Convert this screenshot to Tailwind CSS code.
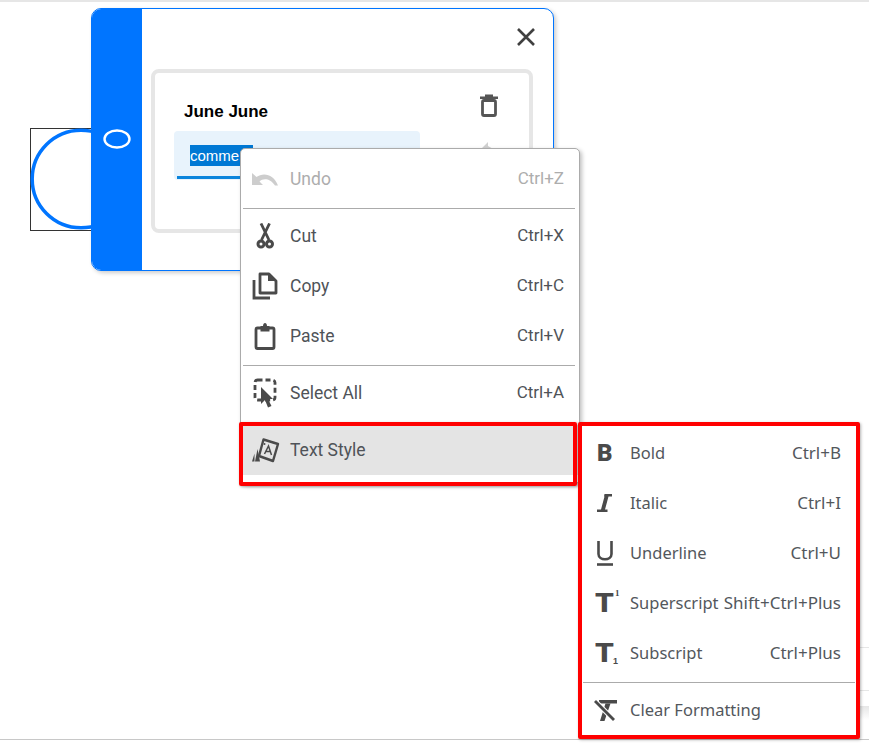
<!DOCTYPE html>
<html>
<head>
<meta charset="utf-8">
<script src="https://cdn.jsdelivr.net/npm/@tailwindcss/browser@4"></script>
</head>
<body class="bg-white">
<div class="relative w-[869px] h-[748px] overflow-hidden bg-white font-['Roboto',sans-serif]">
  <div class="h-[2px] bg-[#e6e6e6]"></div>

  <!-- background fragments at right edge -->
  <div class="absolute left-[860px] top-[647px] w-[9px] h-px bg-[#e6e6e6]"></div>
  <div class="absolute left-[860px] top-[690px] w-[9px] h-px bg-[#e6e6e6]"></div>
  <div class="absolute left-[860px] top-[706px] w-[9px] h-[14px] bg-gradient-to-b from-[#e6e6e6] to-white"></div>
  <div class="absolute left-0 top-[739px] w-[869px] h-px bg-[#c8c8c8]"></div>

  <!-- selection shape on the canvas -->
  <div class="absolute left-[30px] top-[128px] w-[102px] h-[103px] border border-[#333333]"></div>
  <svg class="absolute left-[30px] top-[128px]" width="102" height="103" viewBox="0 0 102 103" fill="none"><circle cx="51" cy="51" r="48.800" stroke="#0075ff" stroke-width="3.500"/></svg>

  <!-- comment dialog -->
  <div class="absolute left-[91px] top-[8px] w-[463px] h-[263px] flex rounded-[10px] border border-[#0075ff] bg-white overflow-hidden shadow-[2px_2px_4px_rgba(0,0,0,0.2)]">
    <div class="w-[50px] shrink-0 bg-[#0075ff] flex justify-center pt-[120px]">
      <svg width="28" height="20" viewBox="0 0 28 20" fill="none"><ellipse cx="14" cy="10" rx="12.500" ry="8.500" stroke="#fff" stroke-width="2.400"/></svg>
    </div>
    <div class="relative flex-1 flex flex-col pl-[9px] pr-[20px]">
      <div class="h-[60px] flex justify-end items-start pt-[19px]">
        <svg width="18" height="18" viewBox="0 0 18 18" fill="none" class="mr-[-2px]"><path d="M1 1L17 17M17 1L1 17" stroke="#404040" stroke-width="2.600"/></svg>
      </div>
      <div class="h-[164px] rounded-[8px] border-4 border-[#e6e6e6] bg-white pl-[19px] pr-[30px] pt-[29px] relative">
        <div class="flex items-start justify-between h-[20px]">
          <span class="pl-[10px] text-[17px] leading-[20px] font-bold text-black font-['Liberation_Sans',sans-serif]">June June</span>
          <svg width="20" height="24" viewBox="0 0 20 24" class="mt-[-9px]" fill="none"><path d="M1 3.500H19V6H1zM6 3.500V1.500H14V3.500" fill="#555"/><rect x="3.500" y="7.500" width="13" height="15" rx="1.500" stroke="#555" stroke-width="2.800"/></svg>
        </div>
        <div class="mt-[9px] w-[246px] h-[49px] rounded-[4px] bg-[#e8f3fc] relative">
          <span class="absolute left-[16px] top-[14px] h-[21px] w-[63px] bg-[#0078d4] text-white text-[15px] leading-[21px] font-['Liberation_Sans',sans-serif]">comment</span>
          <div class="absolute left-[3px] bottom-[1px] w-[240px] h-[3px] bg-[#0a84dc]"></div>
        </div>
        <svg class="absolute left-[325px] top-[68px]" width="16" height="10" viewBox="0 0 16 10"><path d="M1 8L8 1V5L15 9H1z" fill="#d0d0d0"/></svg>
      </div>
    </div>
  </div>

  <!-- context menu -->
  <div class="absolute left-[240px] top-[148px] w-[340px] h-[336px] rounded-[5px] border border-[#ababab] bg-white shadow-[2px_2px_4px_rgba(0,0,0,0.25)] flex flex-col pt-[5px] text-[17.500px] text-[#4f5358]">
    <div class="h-[50px] flex items-center pl-[11px] pr-[15px] text-[#adadad]">
      <svg class="w-[26px] shrink-0" width="26" height="16" viewBox="0 0 26 16"><path d="M0 2V14H11L7.500 10.500C11 7 18 7 23 14.500H26C22 3 11 1 4.500 6z" fill="#cdcdcd"/></svg>
      <span class="ml-[12px] flex-1">Undo</span><span class="text-[17px]">Ctrl+Z</span>
    </div>
    <div class="ml-[2px] mr-[4px] mt-[4px] mb-[4px] h-px bg-[#ababab]"></div>
    <div class="h-[50px] mt-[-2px] flex items-center pl-[11px] pr-[15px]">
      <svg class="w-[26px] shrink-0" width="26" height="26" viewBox="0 0 26 26" fill="none"><path d="M9 0.500L17 17M17.500 0.500L9.500 17" stroke="#4a4a4a" stroke-width="2.800"/><circle cx="9" cy="21" r="3" stroke="#4a4a4a" stroke-width="3"/><circle cx="17.500" cy="21" r="3" stroke="#4a4a4a" stroke-width="3"/></svg>
      <span class="ml-[12px] flex-1">Cut</span><span class="text-[17px]">Ctrl+X</span>
    </div>
    <div class="h-[50px] flex items-center pl-[11px] pr-[15px]">
      <svg class="w-[26px] shrink-0" width="26" height="28" viewBox="0 0 26 28" fill="none"><path d="M8 2H17L24 9V21H8z" stroke="#4a4a4a" stroke-width="2.800" stroke-linejoin="round"/><path d="M16 2V9H24" fill="#4a4a4a"/><path d="M2 8V26H18" stroke="#4a4a4a" stroke-width="2.800"/></svg>
      <span class="ml-[12px] flex-1">Copy</span><span class="text-[17px]">Ctrl+C</span>
    </div>
    <div class="h-[50px] flex items-center pl-[11px] pr-[15px]">
      <svg class="w-[26px] shrink-0" width="26" height="28" viewBox="0 0 26 28" fill="none"><rect x="4" y="6" width="18" height="20.500" rx="1.500" stroke="#4a4a4a" stroke-width="2.800"/><path d="M8.500 4H11C11 0 15 0 15 4H17.500V9.500H8.500z" fill="#4a4a4a"/></svg>
      <span class="ml-[12px] flex-1">Paste</span><span class="text-[17px]">Ctrl+V</span>
    </div>
    <div class="ml-[2px] mr-[4px] mt-[4px] mb-[4px] h-px bg-[#ababab]"></div>
    <div class="h-[50px] mt-[-2px] flex items-center pl-[11px] pr-[15px]">
      <svg class="w-[26px] shrink-0" width="26" height="30" viewBox="0 0 26 30" fill="none"><rect x="3" y="2" width="20" height="20" rx="2.500" stroke="#4a4a4a" stroke-width="2.800" stroke-dasharray="5 3"/><path d="M9 9V26L13 22L16 29.500L19.500 28L16 21H21z" fill="#4a4a4a"/></svg>
      <span class="ml-[12px] flex-1">Select All</span><span class="text-[17px]">Ctrl+A</span>
    </div>
    <div class="h-[50px] mt-[7px] bg-[#e4e4e4] flex items-center pl-[11px] pr-[15px]">
      <svg class="w-[28px] shrink-0 mr-[-2px]" width="28" height="26" viewBox="0 0 28 26" fill="none"><path d="M11.500 2.500L26 7L21 24L7 19z" stroke="#4a4a4a" stroke-width="2.400" stroke-linejoin="round"/><path d="M12.500 17L16.500 9L19.500 18M13.800 14.500H18.800" stroke="#4a4a4a" stroke-width="1.500"/><circle cx="12.500" cy="7" r="1" fill="#4a4a4a"/><path d="M5.500 12L3 24.500H8zM2.500 16.500L0 24.500H2.500z" fill="#4a4a4a"/></svg>
      <span class="ml-[12px] flex-1">Text Style</span>
    </div>
  </div>
  <!-- red annotation over the Text Style row -->
  <div class="absolute left-[239px] top-[422px] w-[338px] h-[64px] border-4 border-[#ff0000] rounded-[2px] shadow-[1px_1px_3px_rgba(0,0,0,0.3)]"></div>

  <!-- submenu -->
  <div class="absolute left-[578px] top-[422px] w-[282px] h-[317px] rounded-[2px] border-4 border-[#ff0000] bg-white shadow-[1px_1px_3px_rgba(0,0,0,0.3)] flex flex-col pt-[2px] text-[16.500px] text-[#53575c] font-['Noto_Sans',sans-serif]">
    <div class="h-[50px] flex items-center pl-[14px] pr-[15px]">
      <span class="w-[34px] pl-[1px] text-[24px] leading-none font-black text-[#4a4a4a] font-['Roboto',sans-serif]">B</span>
      <span class="flex-1">Bold</span><span class="text-[17px]">Ctrl+B</span>
    </div>
    <div class="h-[50px] flex items-center pl-[15px] pr-[15px]">
      <svg class="shrink-0 mr-[18px]" width="15" height="18" viewBox="0 0 15 18"><path d="M7.500 0H15V2.500H11.500L8 15.500H10.500V18H0V15.500H4L7.500 2.500H7z" fill="#4a4a4a"/></svg>
      <span class="flex-1">Italic</span><span class="text-[17px]">Ctrl+I</span>
    </div>
    <div class="h-[50px] flex items-center pl-[15px] pr-[15px]">
      <svg class="shrink-0 mr-[17px]" width="16" height="25" viewBox="0 0 16 25" fill="none"><path d="M1.500 0V13C1.500 20 14.500 20 14.500 13V0" stroke="#4a4a4a" stroke-width="2.600"/><path d="M0 23.500H16" stroke="#4a4a4a" stroke-width="2.600"/></svg>
      <span class="flex-1">Underline</span><span class="text-[17px]">Ctrl+U</span>
    </div>
    <div class="h-[50px] flex items-center pl-[13px] pr-[15px]">
      <span class="w-[35px] relative leading-none text-[#4a4a4a]"><span class="block origin-left scale-x-[1.150] text-[26px] leading-none font-black font-['Roboto',sans-serif]">T</span><span class="absolute left-[20px] top-[-1px] text-[9px] leading-none font-bold font-['Liberation_Serif',serif]">1</span></span>
      <span class="flex-1">Superscript</span><span class="text-[17px]">Shift+Ctrl+Plus</span>
    </div>
    <div class="h-[50px] flex items-center pl-[13px] pr-[15px]">
      <span class="w-[35px] relative leading-none text-[#4a4a4a]"><span class="block origin-left scale-x-[1.150] text-[26px] leading-none font-black font-['Roboto',sans-serif]">T</span><span class="absolute left-[18px] top-[17px] text-[9px] leading-none font-bold font-['Liberation_Sans',sans-serif]">1</span></span>
      <span class="flex-1">Subscript</span><span class="text-[17px]">Ctrl+Plus</span>
    </div>
    <div class="mx-[1px] my-[4px] h-px bg-[#ababab]"></div>
    <div class="h-[50px] mt-[-2px] flex items-center pl-[12px] pr-[15px]">
      <svg class="shrink-0 mr-[13px]" width="23" height="21" viewBox="0 0 23 21" fill="none"><path d="M5 0H23V3.500H5z" fill="#4a4a4a"/><path d="M11.500 3.500H16.500L10.500 21H6z" fill="#4a4a4a"/><path d="M1 1L20 20" stroke="#ffffff" stroke-width="5"/><path d="M1 1L20 20" stroke="#4a4a4a" stroke-width="2.800"/></svg>
      <span class="flex-1">Clear Formatting</span>
    </div>
  </div>
</div>
</body>
</html>
